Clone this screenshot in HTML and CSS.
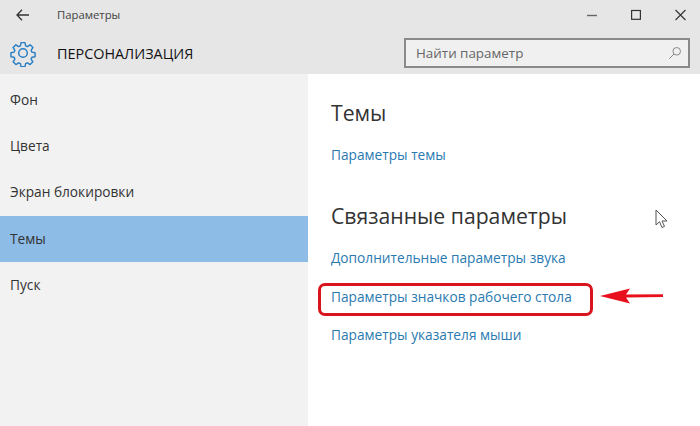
FILE: index.html
```html
<!DOCTYPE html>
<html lang="ru">
<head>
<meta charset="utf-8">
<title>Параметры</title>
<link rel="stylesheet" href="styles.css">
</head>
<body>
<div class="window">
  <header class="header">
    <div class="titlebar">
      <svg class="back" width="13" height="12" viewBox="0 0 13 12"><path d="M6 .8 1 6l5 5.200M1 6h12" fill="none" stroke="#333" stroke-width="1.300"/></svg>
      <span class="title">Параметры</span>
      <div class="controls">
        <svg width="10" height="12" viewBox="0 0 10 12"><path d="M0 6.500h10" stroke="#666" stroke-width="1.400"/></svg>
        <svg width="10" height="12" viewBox="0 0 10 12"><rect x=".6" y="1.500" width="8.800" height="8.800" fill="none" stroke="#333" stroke-width="1.200"/></svg>
        <svg width="11" height="12" viewBox="0 0 11 12"><path d="M.5 1l10 10M10.500 1 .5 11" stroke="#333" stroke-width="1.100"/></svg>
      </div>
    </div>
    <div class="headrow">
      <svg class="gear" width="28" height="28" viewBox="0 0 28 28"><path d="M11.800 2.500h4.400l.7 3.500 2 .9 3-2 3.100 3.100-2 3 .9 2 3.500.7v4.400l-3.500.7-.9 2 2 3-3.100 3.100-3-2-2 .9-.7 3.500h-4.400l-.7-3.500-2-.9-3 2-3.100-3.100 2-3-.9-2-3.500-.7v-4.400l3.500-.7.900-2-2-3 3.100-3.100 3 2 2-.9z" transform="translate(1.400 1.400) scale(.9)" fill="none" stroke="#2a7fc4" stroke-width="1.600" stroke-linejoin="round"/><circle cx="14" cy="14" r="4.300" fill="none" stroke="#2a7fc4" stroke-width="1.500"/></svg>
      <h1 class="section">ПЕРСОНАЛИЗАЦИЯ</h1>
      <div class="search">
        <span class="placeholder">Найти параметр</span>
        <svg width="14" height="14" viewBox="0 0 14 14"><circle cx="8.700" cy="5.300" r="3.800" fill="none" stroke="#888" stroke-width="1"/><path d="M6 8 1.200 12.800" stroke="#888" stroke-width="1"/></svg>
      </div>
    </div>
  </header>
  <div class="body">
    <nav class="sidebar">
      <a class="item">Фон</a>
      <a class="item">Цвета</a>
      <a class="item">Экран блокировки</a>
      <a class="item active">Темы</a>
      <a class="item">Пуск</a>
    </nav>
    <main class="content">
      <h2 class="heading">Темы</h2>
      <a class="link">Параметры темы</a>
      <h2 class="heading second">Связанные параметры</h2>
      <a class="link">Дополнительные параметры звука</a>
      <a class="link marked">Параметры значков рабочего стола
        <span class="ring"></span>
        <svg class="arrow" width="64" height="16" viewBox="0 0 64 16"><path d="M0 8 30 .5 26 6.500 63 6.200v2.800L26 9.500 30 15.500z" fill="#e8101c"/></svg>
      </a>
      <a class="link">Параметры указателя мыши</a>
      <svg class="cursor" width="14" height="20" viewBox="0 0 14 20"><path d="M1 1v15l3.500-3.300L7 18.500l2.500-1.100L7 12h5z" fill="#fff" stroke="#555" stroke-width="1"/></svg>
    </main>
  </div>
</div>
</body>
</html>
```
FILE: styles.css
```css
* { box-sizing: border-box; }
html, body { margin: 0; padding: 0; }
body { width: 700px; height: 426px; overflow: hidden; font-family: "Open Sans", "Noto Sans", sans-serif; color: #222; background: #fff; }
.window { display: flex; flex-direction: column; height: 426px; }
.header { height: 74px; background: #e6e6e6; display: flex; flex-direction: column; flex: none; }
.titlebar { height: 29px; display: flex; align-items: center; padding-left: 16px; flex: none; }
.back { flex: none; }
.title { margin-left: 28px; font-size: 11.300px; color: #444; }
.controls { margin-left: auto; display: flex; gap: 34px; padding-right: 14px; align-items: center; }
.headrow { flex: 1; display: flex; align-items: center; padding: 3px 10px 0 9px; }
.gear { flex: none; }
.section { margin: 0 0 0 20px; font-size: 14.400px; font-weight: 400; color: #111; }
.search { margin-left: auto; width: 286px; height: 30px; border: 2px solid #8a8a8a; background: #f0f0f0; display: flex; align-items: center; justify-content: space-between; padding: 0 6px 0 10px; }
.placeholder { font-size: 13.400px; color: #666; }
.body { flex: 1; display: flex; }
.sidebar { width: 308px; background: #f2f2f2; padding-top: 3px; flex: none; }
.item { display: flex; align-items: center; height: 46.300px; padding: 0 0 2px 10px; font-size: 13.700px; color: #333; }
.active { background: #8dbce6; }
.content { flex: 1; position: relative; padding: 24px 0 0 23px; display: flex; flex-direction: column; align-items: flex-start; background: #fff; }
.heading { margin: 0; font-size: 21.200px; font-weight: 400; line-height: 30px; color: #333; }
.second { margin-top: 36px; }
.link { position: relative; font-size: 13.700px; line-height: 20px; color: #2a7ab0; }
.heading + .link { margin-top: 17px; }
.link + .link { margin-top: 19px; }
.marked + .link { margin-top: 18px; }
.ring { position: absolute; left: -13px; top: -4px; width: 275px; height: 33px; border: 3px solid #d9141f; border-radius: 7px; }
.arrow { position: absolute; left: 269px; top: 1px; }
.cursor { position: absolute; left: 347px; top: 135px; }
```
